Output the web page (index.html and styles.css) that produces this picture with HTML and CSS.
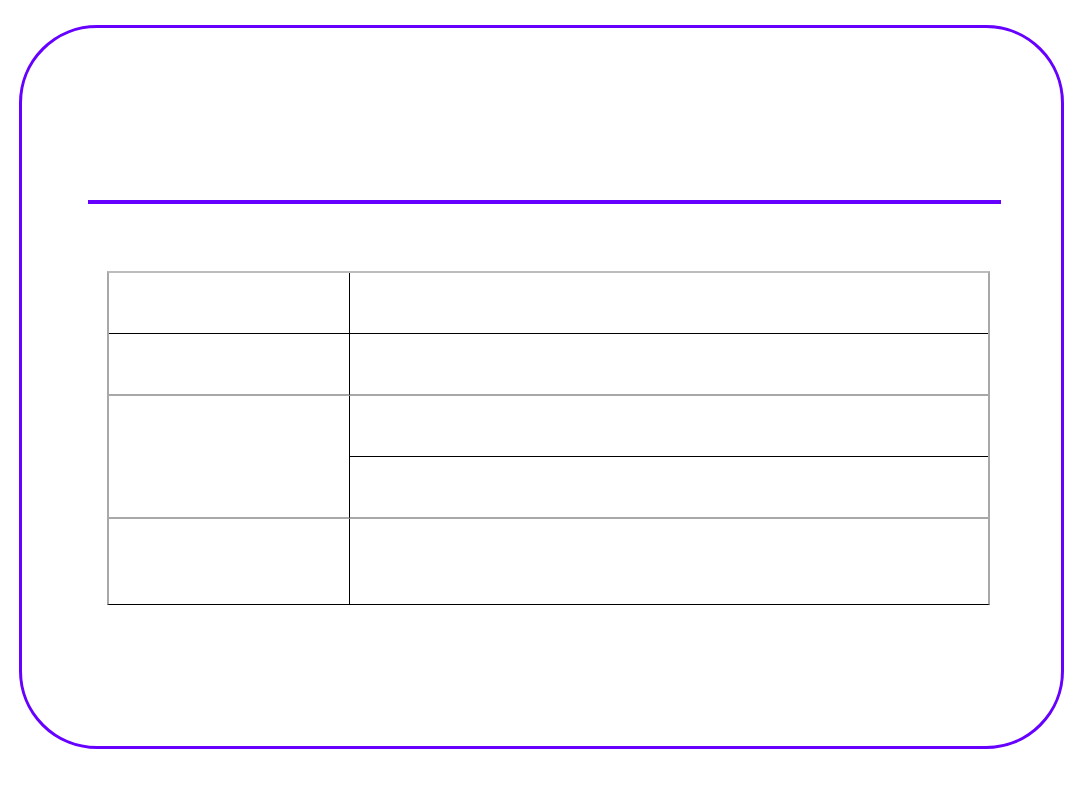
FILE: index.html
```html
<!DOCTYPE html>
<html>
<head>
<meta charset="utf-8">
<link rel="stylesheet" href="styles.css">
</head>
<body>
<div class="frame">
  <div class="rule"></div>
  <div class="tbl">
    <div class="c l r1"></div>
    <div class="c r r1"></div>
    <div class="c l r2"></div>
    <div class="c r r2"></div>
    <div class="c l r34"></div>
    <div class="c r r3"></div>
    <div class="c r r4"></div>
    <div class="c l r5"></div>
    <div class="c r r5"></div>
  </div>
</div>
</body>
</html>
```

FILE: styles.css
```css
html, body {
  margin: 0;
  padding: 0;
  background: #ffffff;
  font-family: "Liberation Sans", Arial, sans-serif;
}
.frame {
  box-sizing: border-box;
  margin: 25px 0 0 19px;
  width: 1045px;
  height: 724px;
  border: 3px solid #6600ff;
  border-radius: 78px;
  padding-top: 172px;
}
.rule {
  margin-left: 66px;
  width: 913px;
  height: 4px;
  background: #6600ff;
}
.tbl {
  margin: 67px 0 0 85px;
  width: 883px;
  box-sizing: border-box;
  display: grid;
  grid-template-columns: 240px 1fr;
  grid-template-rows: 61px 62px 61px 62px 85px;
  border-left: 2px solid #a8a8a8;
  border-right: 2px solid #a8a8a8;
  border-top: 2px solid #bcbcbc;
  border-bottom: 1px solid #000000;
}
.c {
  box-sizing: border-box;
}
.r {
  border-left: 1px solid #000000;
}
.r1 { border-bottom: 1px solid #000000; }
.r2 { border-bottom: 2px solid #a8a8a8; }
.r34 { grid-row: 3 / span 2; border-bottom: 2px solid #a8a8a8; }
.r3 { border-bottom: 1px solid #000000; }
.r4 { border-bottom: 2px solid #a8a8a8; }
```
